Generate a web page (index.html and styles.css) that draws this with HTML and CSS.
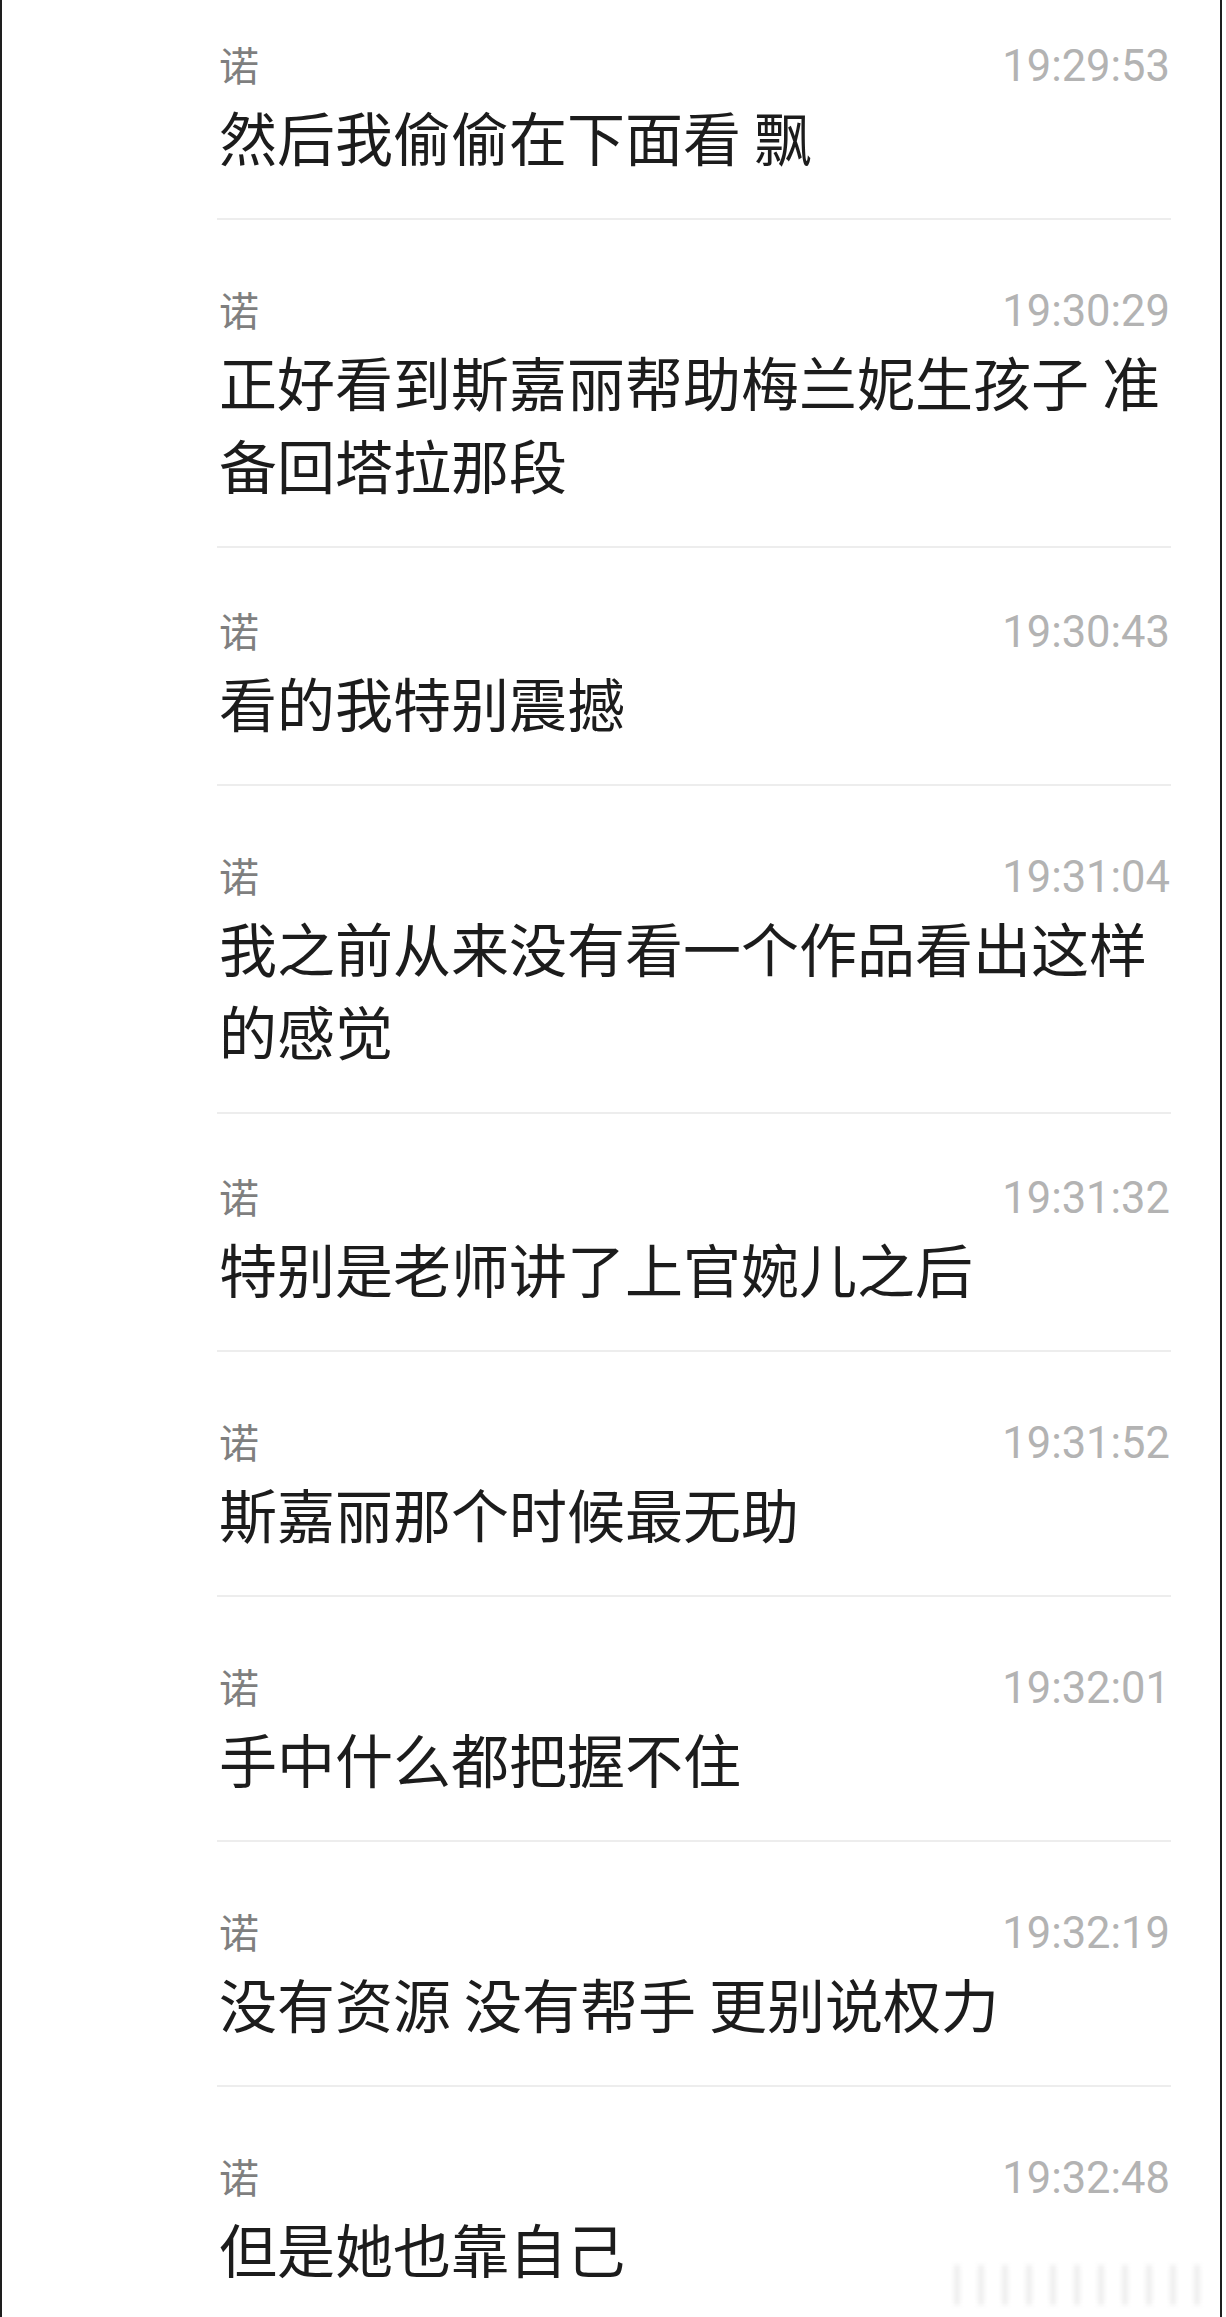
FILE: index.html
```html
<!DOCTYPE html>
<html lang="zh-CN">
<head>
<meta charset="utf-8">
<title>聊天记录</title>
<link rel="stylesheet" href="styles.css">
</head>
<body>
<div class="frame">
  <div class="list">
    <div class="entry">
      <div class="head"><span class="name">诺</span><span class="time">19:29:53</span></div>
      <div class="msg">然后我偷偷在下面看 飘</div>
    </div>
    <div class="entry">
      <div class="head"><span class="name">诺</span><span class="time">19:30:29</span></div>
      <div class="msg">正好看到斯嘉丽帮助梅兰妮生孩子 准<br>备回塔拉那段</div>
    </div>
    <div class="entry entry-tight">
      <div class="head"><span class="name">诺</span><span class="time">19:30:43</span></div>
      <div class="msg">看的我特别震撼</div>
    </div>
    <div class="entry">
      <div class="head"><span class="name">诺</span><span class="time">19:31:04</span></div>
      <div class="msg">我之前从来没有看一个作品看出这样<br>的感觉</div>
    </div>
    <div class="entry entry-tight">
      <div class="head"><span class="name">诺</span><span class="time">19:31:32</span></div>
      <div class="msg">特别是老师讲了上官婉儿之后</div>
    </div>
    <div class="entry">
      <div class="head"><span class="name">诺</span><span class="time">19:31:52</span></div>
      <div class="msg">斯嘉丽那个时候最无助</div>
    </div>
    <div class="entry">
      <div class="head"><span class="name">诺</span><span class="time">19:32:01</span></div>
      <div class="msg">手中什么都把握不住</div>
    </div>
    <div class="entry">
      <div class="head"><span class="name">诺</span><span class="time">19:32:19</span></div>
      <div class="msg">没有资源 没有帮手 更别说权力</div>
    </div>
    <div class="entry">
      <div class="head"><span class="name">诺</span><span class="time">19:32:48</span></div>
      <div class="msg">但是她也靠自己</div>
    </div>
  </div>
  <div class="watermark"></div>
</div>
</body>
</html>
```

FILE: styles.css
```css
html, body {
  margin: 0;
  padding: 0;
  background: #ffffff;
}

body {
  width: 1226px;
  height: 2317px;
  overflow: hidden;
  font-family: "Noto Sans CJK SC", "Noto Sans", sans-serif;
}

.frame {
  position: relative;
  width: 1218px;
  height: 2317px;
  border-left: 2px solid #1e1e1e;
  border-right: 2px solid #1e1e1e;
  box-sizing: content-box;
  overflow: hidden;
  background: #ffffff;
}

.list {
  margin-left: 215px;
  width: 954px;
}

.entry {
  padding: 65px 0 40px;
  border-bottom: 2px solid #ededed;
}

.entry:first-child {
  padding-top: 40px;
}

.entry-tight {
  padding-top: 58px;
}

.head {
  display: flex;
  justify-content: space-between;
  align-items: baseline;
  height: 48px;
}

.name {
  font-size: 40px;
  line-height: 48px;
  color: #7f7f7f;
  padding-left: 2px;
}

.time {
  font-family: Roboto, "Liberation Sans", sans-serif;
  font-size: 43.5px;
  line-height: 48px;
  color: #b3b3b3;
  padding-right: 1px;
}

.msg {
  margin-top: 7px;
  font-size: 58px;
  line-height: 83px;
  color: #1c1c1c;
  padding-left: 2px;
  white-space: nowrap;
}

.watermark {
  position: absolute;
  right: 6px;
  bottom: 12px;
  width: 270px;
  height: 40px;
  background: repeating-linear-gradient(90deg,
    #ffffff 0px, #ffffff 10px,
    #e8e8e8 10px, #e8e8e8 16px,
    #ffffff 16px, #ffffff 24px);
  opacity: 0.7;
  filter: blur(2px);
}
```
